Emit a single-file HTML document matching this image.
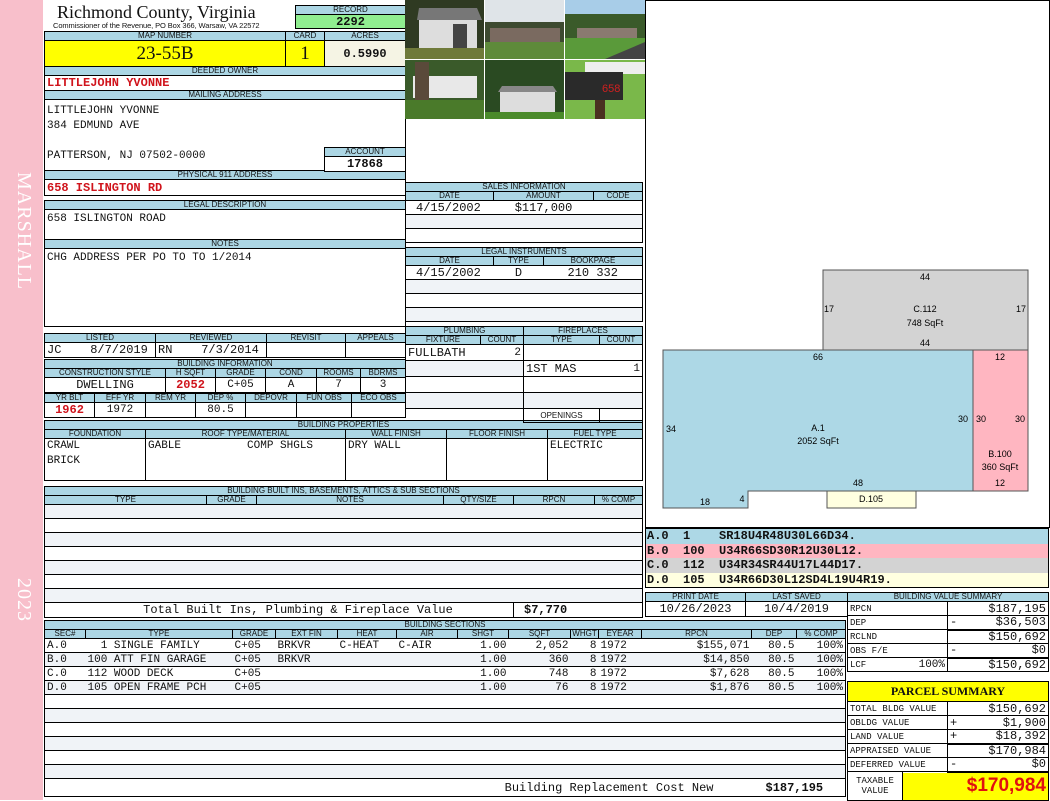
<!DOCTYPE html>
<html><head><meta charset="utf-8"><style>
*{margin:0;padding:0;box-sizing:border-box}
body{width:1050px;height:800px;position:relative;background:#fff;overflow:hidden;font-family:"Liberation Mono",monospace;font-size:11px;color:#111}
.a{position:absolute}
table{position:absolute;border-collapse:collapse;table-layout:fixed}
td{border:1px solid #000;padding:0 2px;white-space:nowrap;overflow:hidden;font-family:"Liberation Mono",monospace;font-size:11px;line-height:12px}
td.h{background:#acd6e4;font:8px/8px "Liberation Sans",sans-serif;text-align:center;padding:0;height:9px}
.c{text-align:center}.r{text-align:right}
.red{color:#d0141c;font-weight:bold}
.bd{font-weight:bold}
.alt td{background:#f0f3f7}
.nv td{border-left:none;border-right:none}
.nv td:first-child{border-left:1px solid #000}
.nv td:last-child{border-right:1px solid #000}
</style></head><body>
<div class="a" style="left:0;top:0;width:43px;height:800px;background:#f8bfcb"></div>
<div class="a" style="left:12px;top:172px;writing-mode:vertical-rl;font:20px 'Liberation Serif',serif;color:#fff;letter-spacing:1px">MARSHALL</div>
<div class="a" style="left:12px;top:578px;writing-mode:vertical-rl;font:20px 'Liberation Serif',serif;color:#fff;letter-spacing:1px">2023</div>

<div class="a" style="left:57px;top:2px;font:18px/20px 'Liberation Serif',serif">Richmond County, Virginia</div>
<div class="a" style="left:53px;top:21px;font:7.5px 'Liberation Sans',sans-serif;letter-spacing:-.1px">Commissioner of the Revenue, PO Box 366, Warsaw, VA 22572</div>

<table style="left:295px;top:5px;width:111px"><tr><td class="h">RECORD</td></tr><tr><td class="c bd" style="background:#90ee90;height:14px;font-size:12px">2292</td></tr></table>

<table style="left:44px;top:31px;width:362px"><colgroup><col style="width:241px"><col style="width:39px"><col></colgroup>
<tr><td class="h">MAP NUMBER</td><td class="h">CARD</td><td class="h">ACRES</td></tr>
<tr><td class="c" style="background:#ffff00;height:26px;font:19px 'Liberation Serif',serif">23-55B</td><td class="c" style="background:#ffff00;font:19px 'Liberation Serif',serif">1</td><td class="c bd" style="background:#f5f4e4;font-size:12px">0.5990</td></tr>
<tr><td class="h" colspan="3">DEEDED OWNER</td></tr>
<tr><td colspan="3" class="red" style="height:15px;font-size:12px">LITTLEJOHN YVONNE</td></tr>
<tr><td class="h" colspan="3">MAILING ADDRESS</td></tr>
<tr><td colspan="3" style="height:71px;vertical-align:top;line-height:15px;padding-top:4px">LITTLEJOHN YVONNE<br>384 EDMUND AVE<br><br>PATTERSON, NJ 07502-0000</td></tr>
<tr><td class="h" colspan="3">PHYSICAL 911 ADDRESS</td></tr>
<tr><td colspan="3" class="red" style="height:16px;font-size:12px">658 ISLINGTON RD</td></tr>
</table>
<table style="left:324px;top:147px;width:82px"><tr><td class="h">ACCOUNT</td></tr><tr><td class="c bd" style="height:15px;background:#fff;font-size:12px">17868</td></tr></table>

<table style="left:44px;top:200px;width:362px">
<tr><td class="h">LEGAL DESCRIPTION</td></tr><tr><td style="height:30px;vertical-align:top;padding-top:3px">658 ISLINGTON ROAD</td></tr>
<tr><td class="h">NOTES</td></tr><tr><td style="height:78px;vertical-align:top;padding-top:3px">CHG ADDRESS PER PO TO TO 1/2014</td></tr></table>

<table style="left:44px;top:333px;width:362px"><colgroup><col style="width:111px"><col style="width:111px"><col style="width:79px"><col></colgroup>
<tr><td class="h">LISTED</td><td class="h">REVIEWED</td><td class="h">REVISIT</td><td class="h">APPEALS</td></tr>
<tr><td style="height:15px;font-size:12px">JC&nbsp;&nbsp;&nbsp;&nbsp;8/7/2019</td><td style="font-size:12px">RN&nbsp;&nbsp;&nbsp;&nbsp;7/3/2014</td><td></td><td></td></tr></table>

<table style="left:44px;top:359px;width:362px"><colgroup><col style="width:121px"><col style="width:50px"><col style="width:50px"><col style="width:51px"><col style="width:44px"><col></colgroup>
<tr><td class="h" colspan="6">BUILDING INFORMATION</td></tr>
<tr><td class="h">CONSTRUCTION STYLE</td><td class="h">H SQFT</td><td class="h">GRADE</td><td class="h">COND</td><td class="h">ROOMS</td><td class="h">BDRMS</td></tr>
<tr><td class="c" style="height:15px;font-size:12px">DWELLING</td><td class="c red" style="font-size:12px">2052</td><td class="c">C+05</td><td class="c">A</td><td class="c">7</td><td class="c">3</td></tr></table>
<table style="left:44px;top:393px;width:362px"><colgroup><col style="width:50px"><col style="width:51px"><col style="width:50px"><col style="width:50px"><col style="width:51px"><col style="width:55px"><col></colgroup>
<tr><td class="h">YR BLT</td><td class="h">EFF YR</td><td class="h">REM YR</td><td class="h">DEP %</td><td class="h">DEPOVR</td><td class="h">FUN OBS</td><td class="h">ECO OBS</td></tr>
<tr><td class="c red" style="height:15px;font-size:12px">1962</td><td class="c">1972</td><td></td><td class="c">80.5</td><td></td><td></td><td></td></tr></table>

<table style="left:44px;top:420px;width:599px"><colgroup><col style="width:101px"><col style="width:200px"><col style="width:101px"><col style="width:101px"><col></colgroup>
<tr><td class="h" colspan="5">BUILDING PROPERTIES</td></tr>
<tr><td class="h">FOUNDATION</td><td class="h">ROOF TYPE/MATERIAL</td><td class="h">WALL FINISH</td><td class="h">FLOOR FINISH</td><td class="h">FUEL TYPE</td></tr>
<tr><td style="height:42px;vertical-align:top;line-height:15px">CRAWL<br>BRICK</td><td style="vertical-align:top;line-height:15px">GABLE&nbsp;&nbsp;&nbsp;&nbsp;&nbsp;&nbsp;&nbsp;&nbsp;&nbsp;&nbsp;COMP SHGLS</td><td style="vertical-align:top;line-height:15px">DRY WALL</td><td></td><td style="vertical-align:top;line-height:15px">ELECTRIC</td></tr></table>

<table style="left:44px;top:486px;width:599px"><colgroup><col style="width:162px"><col style="width:50px"><col style="width:187px"><col style="width:70px"><col style="width:81px"><col></colgroup>
<tr><td class="h" colspan="6">BUILDING BUILT INS, BASEMENTS, ATTICS &amp; SUB SECTIONS</td></tr>
<tr><td class="h">TYPE</td><td class="h">GRADE</td><td class="h">NOTES</td><td class="h">QTY/SIZE</td><td class="h">RPCN</td><td class="h">% COMP</td></tr>
<tr class="alt"><td colspan="6" style="height:14px"></td></tr>
<tr><td colspan="6" style="height:14px"></td></tr>
<tr class="alt"><td colspan="6" style="height:14px"></td></tr>
<tr><td colspan="6" style="height:14px"></td></tr>
<tr class="alt"><td colspan="6" style="height:14px"></td></tr>
<tr><td colspan="6" style="height:14px"></td></tr>
<tr class="alt"><td colspan="6" style="height:14px"></td></tr>
<tr><td colspan="4" class="c" style="height:15px;font-size:12px;padding-left:40px">Total Built Ins, Plumbing &amp; Fireplace Value</td><td colspan="2" class="bd" style="font-size:12px;padding-left:10px">$7,770</td></tr></table>

<table style="left:44px;top:620px;width:802px"><colgroup><col style="width:41px"><col style="width:147px"><col style="width:43px"><col style="width:62px"><col style="width:59px"><col style="width:61px"><col style="width:51px"><col style="width:62px"><col style="width:28px"><col style="width:43px"><col style="width:110px"><col style="width:45px"><col></colgroup>
<tr><td class="h" colspan="13">BUILDING SECTIONS</td></tr>
<tr><td class="h">SEC#</td><td class="h">TYPE</td><td class="h">GRADE</td><td class="h">EXT FIN</td><td class="h">HEAT</td><td class="h">AIR</td><td class="h">SHGT</td><td class="h">SQFT</td><td class="h">WHGT</td><td class="h">EYEAR</td><td class="h">RPCN</td><td class="h">DEP</td><td class="h">% COMP</td></tr>
<tr class="nv"><td style="height:14px">A.0</td><td>&nbsp;&nbsp;1 SINGLE FAMILY</td><td>C+05</td><td>BRKVR</td><td>C-HEAT</td><td>C-AIR</td><td class="r">1.00</td><td class="r">2,052</td><td class="r">8</td><td>1972</td><td class="r">$155,071</td><td class="r">80.5</td><td class="r">100%</td></tr>
<tr class="alt nv"><td style="height:14px">B.0</td><td>100 ATT FIN GARAGE</td><td>C+05</td><td>BRKVR</td><td></td><td></td><td class="r">1.00</td><td class="r">360</td><td class="r">8</td><td>1972</td><td class="r">$14,850</td><td class="r">80.5</td><td class="r">100%</td></tr>
<tr class="nv"><td style="height:14px">C.0</td><td>112 WOOD DECK</td><td>C+05</td><td></td><td></td><td></td><td class="r">1.00</td><td class="r">748</td><td class="r">8</td><td>1972</td><td class="r">$7,628</td><td class="r">80.5</td><td class="r">100%</td></tr>
<tr class="alt nv"><td style="height:14px">D.0</td><td>105 OPEN FRAME PCH</td><td>C+05</td><td></td><td></td><td></td><td class="r">1.00</td><td class="r">76</td><td class="r">8</td><td>1972</td><td class="r">$1,876</td><td class="r">80.5</td><td class="r">100%</td></tr>
<tr><td colspan="13" style="height:14px"></td></tr>
<tr class="alt"><td colspan="13" style="height:14px"></td></tr>
<tr><td colspan="13" style="height:14px"></td></tr>
<tr class="alt"><td colspan="13" style="height:14px"></td></tr>
<tr><td colspan="13" style="height:14px"></td></tr>
<tr class="alt"><td colspan="13" style="height:14px"></td></tr>
<tr><td colspan="11" class="r" style="height:18px;font-size:12px;padding-right:38px;border-right:none">Building Replacement Cost New</td><td colspan="2" class="bd" style="font-size:12px;border-left:none;padding-left:14px">$187,195</td></tr></table>

<svg class="a" style="left:405px;top:0" width="240" height="119" viewBox="0 0 240 119">
<rect width="240" height="119" fill="#fff"/>
<rect x="0" y="0" width="79" height="59" fill="#2f3a22"/><rect x="0" y="48" width="79" height="11" fill="#6f7a3a"/><polygon points="14,8 72,8 77,20 12,20" fill="#777"/><rect x="14" y="20" width="58" height="28" fill="#ddd"/><rect x="48" y="24" width="14" height="24" fill="#444"/>
<rect x="80" y="0" width="79" height="59" fill="#dfe4e8"/><rect x="80" y="22" width="79" height="20" fill="#3d4a30"/><rect x="85" y="28" width="70" height="14" fill="#7a6a60"/><rect x="80" y="42" width="79" height="17" fill="#5e8a3a"/>
<rect x="160" y="0" width="80" height="59" fill="#a8cde8"/><rect x="160" y="14" width="80" height="24" fill="#3a5a2a"/><rect x="172" y="28" width="60" height="10" fill="#8a7a70"/><rect x="160" y="38" width="80" height="21" fill="#5a9a3a"/><polygon points="200,59 240,42 240,59" fill="#444"/>
<rect x="0" y="60" width="79" height="59" fill="#3a5a2a"/><rect x="8" y="76" width="64" height="22" fill="#e8e8e8"/><rect x="10" y="62" width="14" height="50" fill="#5a4a3a"/><rect x="0" y="100" width="79" height="19" fill="#4a7a2a"/>
<rect x="80" y="60" width="79" height="59" fill="#2a4a22"/><rect x="95" y="92" width="55" height="22" fill="#ddd"/><polygon points="93,92 152,92 148,86 97,86" fill="#888"/><rect x="80" y="112" width="79" height="7" fill="#4a8a2a"/>
<rect x="160" y="60" width="80" height="59" fill="#7ab84a"/><rect x="180" y="62" width="60" height="12" fill="#eee"/><rect x="160" y="72" width="58" height="28" fill="#2a2a2a"/><rect x="190" y="100" width="10" height="19" fill="#4a3020"/><text x="197" y="92" fill="#d02020" font-family="Liberation Sans" font-size="11">658</text>
</svg>

<table style="left:405px;top:182px;width:238px"><colgroup><col style="width:88px"><col style="width:100px"><col></colgroup>
<tr><td class="h" colspan="3">SALES INFORMATION</td></tr>
<tr><td class="h">DATE</td><td class="h">AMOUNT</td><td class="h">CODE</td></tr>
<tr><td style="height:14px;font-size:12px;padding-left:10px;border-right:none">4/15/2002</td><td class="c" style="font-size:12px;border-left:none;border-right:none">$117,000</td><td style="border-left:none"></td></tr>
<tr class="alt"><td colspan="3" style="height:14px"></td></tr>
<tr><td colspan="3" style="height:14px"></td></tr></table>
<table style="left:405px;top:247px;width:238px"><colgroup><col style="width:88px"><col style="width:50px"><col></colgroup>
<tr><td class="h" colspan="3">LEGAL INSTRUMENTS</td></tr>
<tr><td class="h">DATE</td><td class="h">TYPE</td><td class="h">BOOKPAGE</td></tr>
<tr><td style="height:14px;font-size:12px;padding-left:10px;border-right:none">4/15/2002</td><td class="c" style="font-size:12px;border-left:none;border-right:none">D</td><td class="c" style="font-size:12px;border-left:none">210 332</td></tr>
<tr class="alt"><td colspan="3" style="height:14px"></td></tr>
<tr><td colspan="3" style="height:14px"></td></tr>
<tr class="alt"><td colspan="3" style="height:14px"></td></tr></table>
<table style="left:405px;top:326px;width:119px"><colgroup><col style="width:75px"><col></colgroup>
<tr><td class="h" colspan="2">PLUMBING</td></tr>
<tr><td class="h">FIXTURE</td><td class="h">COUNT</td></tr>
<tr><td style="height:16px;font-size:12px;border-right:none">FULLBATH</td><td class="r" style="border-left:none">2</td></tr>
<tr class="alt"><td colspan="2" style="height:16px"></td></tr>
<tr><td colspan="2" style="height:16px"></td></tr>
<tr class="alt"><td colspan="2" style="height:16px"></td></tr></table>
<table style="left:523px;top:326px;width:120px"><colgroup><col style="width:76px"><col></colgroup>
<tr><td class="h" colspan="2">FIREPLACES</td></tr>
<tr><td class="h">TYPE</td><td class="h">COUNT</td></tr>
<tr><td colspan="2" style="height:16px"></td></tr>
<tr><td style="height:16px;font-size:12px;border-right:none">1ST MAS</td><td class="r" style="border-left:none">1</td></tr>
<tr><td colspan="2" style="height:16px"></td></tr>
<tr class="alt"><td colspan="2" style="height:16px"></td></tr>
<tr><td class="c" style="height:14px;font:8px 'Liberation Sans',sans-serif">OPENINGS</td><td></td></tr></table>

<svg class="a" style="left:645px;top:0" width="405" height="528" viewBox="645 0 405 528" font-family="Liberation Sans" font-size="9" text-anchor="middle">
<rect x="645.5" y="0.5" width="404" height="527" fill="#fff" stroke="#000"/>
<rect x="823" y="270" width="205" height="80" fill="#d3d3d3" stroke="#555"/>
<polygon points="663,350 973,350 973,491 748,491 748,508 663,508" fill="#add8e6" stroke="#555"/>
<rect x="973" y="350" width="55" height="141" fill="#ffb6c1" stroke="#555"/>
<rect x="827" y="491" width="89" height="17" fill="#ffffe0" stroke="#555"/>
<text x="925" y="280">44</text><text x="829" y="312">17</text><text x="1021" y="312">17</text>
<text x="925" y="312">C.112</text><text x="925" y="326">748 SqFt</text><text x="925" y="346">44</text>
<text x="818" y="360">66</text><text x="1000" y="360">12</text><text x="671" y="432">34</text>
<text x="818" y="431">A.1</text><text x="818" y="444">2052 SqFt</text>
<text x="963" y="422">30</text><text x="981" y="422">30</text><text x="1020" y="422">30</text>
<text x="1000" y="457">B.100</text><text x="1000" y="470">360 SqFt</text><text x="1000" y="486">12</text>
<text x="858" y="486">48</text><text x="871" y="502">D.105</text><text x="705" y="505">18</text><text x="742" y="502">4</text>
</svg>

<div class="a" style="left:645px;top:528px;width:404px;height:60px;border:1px solid #000;font:bold 12px/14.5px 'Liberation Mono',monospace">
<div style="background:#add8e6;padding-left:1px">A.0&nbsp;&nbsp;1&nbsp;&nbsp;&nbsp;&nbsp;SR18U4R48U30L66D34.</div>
<div style="background:#ffb6c1;padding-left:1px">B.0&nbsp;&nbsp;100&nbsp;&nbsp;U34R66SD30R12U30L12.</div>
<div style="background:#d3d3d3;padding-left:1px">C.0&nbsp;&nbsp;112&nbsp;&nbsp;U34R34SR44U17L44D17.</div>
<div style="background:#ffffe0;padding-left:1px">D.0&nbsp;&nbsp;105&nbsp;&nbsp;U34R66D30L12SD4L19U4R19.</div></div>

<table style="left:645px;top:592px;width:203px"><colgroup><col style="width:100px"><col></colgroup>
<tr><td class="h">PRINT DATE</td><td class="h">LAST SAVED</td></tr>
<tr><td class="c" style="height:15px;font-size:12px">10/26/2023</td><td class="c" style="font-size:12px">10/4/2019</td></tr></table>

<table style="left:847px;top:592px;width:202px;font-size:10px"><colgroup><col style="width:100px"><col></colgroup>
<tr><td class="h" colspan="2">BUILDING VALUE SUMMARY</td></tr>
<tr><td style="height:14px;font-size:9px">RPCN</td><td class="r" style="font-size:12px">$187,195</td></tr>
<tr><td style="height:14px;font-size:9px">DEP</td><td class="r" style="font-size:12px;border-bottom:2px solid #000"><span style="float:left">-</span>$36,503</td></tr>
<tr><td style="height:14px;font-size:9px">RCLND</td><td class="r" style="font-size:12px">$150,692</td></tr>
<tr><td style="height:14px;font-size:9px">OBS F/E</td><td class="r" style="font-size:12px;border-bottom:2px solid #000"><span style="float:left">-</span>$0</td></tr>
<tr><td style="height:14px;font-size:9px">LCF<span style="float:right;font-size:11px">100%</span></td><td class="r" style="font-size:12px">$150,692</td></tr></table>

<table style="left:847px;top:681px;width:202px"><colgroup><col style="width:55px"><col style="width:45px"><col></colgroup>
<tr><td colspan="3" class="c bd" style="background:#ffff00;height:20px;font:bold 12px 'Liberation Serif',serif">PARCEL SUMMARY</td></tr>
<tr><td colspan="2" style="height:14px;font-size:9px">TOTAL BLDG VALUE</td><td class="r" style="font-size:12px">$150,692</td></tr>
<tr><td colspan="2" style="height:14px;font-size:9px">OBLDG VALUE</td><td class="r" style="font-size:12px"><span style="float:left">+</span>$1,900</td></tr>
<tr><td colspan="2" style="height:14px;font-size:9px">LAND VALUE</td><td class="r" style="font-size:12px;border-bottom:2px solid #000"><span style="float:left">+</span>$18,392</td></tr>
<tr><td colspan="2" style="height:14px;font-size:9px">APPRAISED VALUE</td><td class="r" style="font-size:12px">$170,984</td></tr>
<tr><td colspan="2" style="height:14px;font-size:9px">DEFERRED VALUE</td><td class="r" style="font-size:12px;border-bottom:2px solid #000"><span style="float:left">-</span>$0</td></tr>
<tr><td class="c" style="height:29px;font-size:9px;line-height:10px">TAXABLE<br>VALUE</td><td colspan="2" class="r" style="background:#ffff00;color:#e01010;font:bold 19px 'Liberation Sans',sans-serif">$170,984</td></tr></table>
</body></html>
